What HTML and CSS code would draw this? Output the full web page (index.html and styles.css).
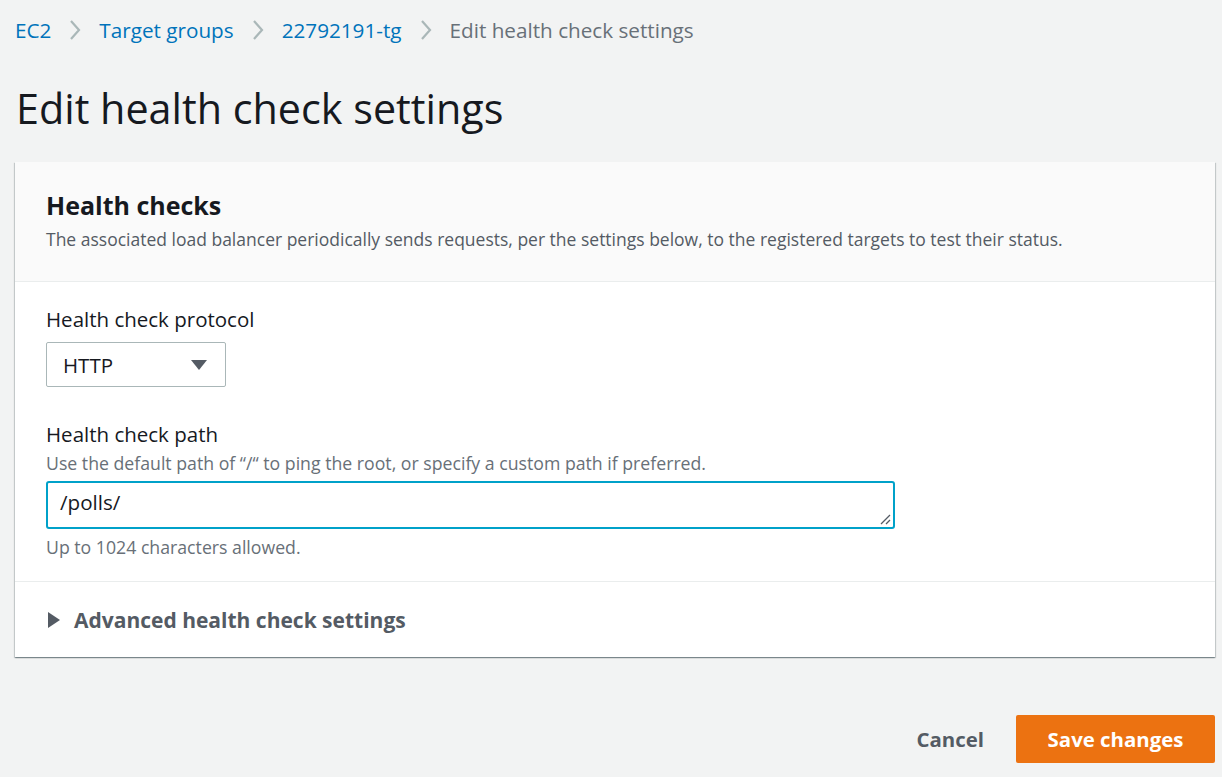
FILE: index.html
```html
<!DOCTYPE html>
<html>
<head>
<meta charset="utf-8">
<link rel="stylesheet" href="styles.css">
</head>
<body>
<div class="page">
  <nav class="crumbs">
    <a class="crumb link">EC2</a>
    <svg class="sep" width="12" height="22" viewBox="0 0 12 22"><path d="M2 2 L10 11 L2 20" fill="none" stroke="#aab7b8" stroke-width="2.2"/></svg>
    <a class="crumb link">Target groups</a>
    <svg class="sep" width="12" height="22" viewBox="0 0 12 22"><path d="M2 2 L10 11 L2 20" fill="none" stroke="#aab7b8" stroke-width="2.2"/></svg>
    <a class="crumb link">22792191-tg</a>
    <svg class="sep" width="12" height="22" viewBox="0 0 12 22"><path d="M2 2 L10 11 L2 20" fill="none" stroke="#aab7b8" stroke-width="2.2"/></svg>
    <span class="crumb current">Edit health check settings</span>
  </nav>
  <h1 class="title">Edit health check settings</h1>
  <section class="card">
    <header class="card-head">
      <h2 class="card-title">Health checks</h2>
      <p class="card-desc">The associated load balancer periodically sends requests, per the settings below, to the registered targets to test their status.</p>
    </header>
    <div class="card-body">
      <div class="field">
        <label class="label">Health check protocol</label>
        <div class="select">
          <span>HTTP</span>
          <svg width="16" height="12" viewBox="0 0 16 12"><path d="M0 1 L16 1 L8 11 Z" fill="#545b64"/></svg>
        </div>
      </div>
      <div class="field">
        <label class="label">Health check path</label>
        <div class="hint">Use the default path of “/“ to ping the root, or specify a custom path if preferred.</div>
        <div class="textarea">
          <span>/polls/</span>
          <svg class="grip" width="12" height="12" viewBox="0 0 12 12"><path d="M11 2 L2 11 M11 7 L7 11" stroke="#545b64" stroke-width="1.3"/></svg>
        </div>
        <div class="hint after">Up to 1024 characters allowed.</div>
      </div>
    </div>
    <div class="card-foot">
      <svg width="14" height="18" viewBox="0 0 14 18"><path d="M1 1 L13 9 L1 17 Z" fill="#545b64"/></svg>
      <span class="adv">Advanced health check settings</span>
    </div>
  </section>
  <div class="actions">
    <button class="btn cancel">Cancel</button>
    <button class="btn primary">Save changes</button>
  </div>
</div>
</body>
</html>
```

FILE: styles.css
```css
html, body { margin: 0; padding: 0; }
body {
  background: #f2f3f3;
  font-family: "Open Sans", "Noto Sans", sans-serif;
  color: #16191f;
  width: 1222px;
  height: 777px;
  overflow: hidden;
}
.page { padding: 0 7px 0 15px; }
.crumbs {
  display: flex;
  align-items: center;
  gap: 18px;
  height: 60px;
  font-size: 20.7px;
}
.crumb { line-height: 26px; }
.link { color: #0073bb; }
.current { color: #687078; }
.sep { display: block; }
.title {
  margin: 0;
  font-size: 41.3px;
  font-weight: 400;
  line-height: 52px;
  padding: 22px 0 28px 1px;
  color: #16191f;
}
.card {
  background: #fff;
  box-shadow: 0 1px 1px 0 rgba(0,28,36,.3), 1px 1px 1px 0 rgba(0,28,36,.15), -1px 1px 1px 0 rgba(0,28,36,.15);
  width: 1200px;
}
.card-head {
  background: #fafafa;
  border-bottom: 1px solid #eaeded;
  padding: 26px 31px 29px;
}
.card-title {
  margin: 0;
  font-size: 25px;
  font-weight: 700;
  line-height: 34px;
}
.card-desc {
  margin: 4px 0 0;
  font-size: 17.5px;
  line-height: 26px;
  color: #545b64;
}
.card-body { padding: 23px 31px 22px; border-bottom: 1px solid #eaeded; }
.field + .field { margin-top: 33px; }
.label { display: block; font-size: 20.5px; line-height: 28px; margin-bottom: 9px; }
.select {
  height: 43px;
  border: 1px solid #aab7b8;
  border-radius: 2px;
  box-sizing: content-box;
  display: flex;
  align-items: center;
  justify-content: space-between;
  width: 162px;
  padding-left: 16px;
  font-size: 20.5px;
}
.select span { line-height: 26px; }
.select svg { margin-right: 18px; }
.hint { font-size: 17.7px; line-height: 24px; color: #687078; margin-top: -6px; margin-bottom: 6px; }
.hint.after { margin-top: 6px; margin-bottom: 0; }
.textarea {
  position: relative;
  border: 2px solid #00a1c9;
  border-radius: 3px;
  display: flex;
  align-items: center;
  padding-left: 12px;
  box-sizing: border-box;
  width: 849px;
  height: 48px;
  font-size: 20.6px;
}
.textarea span { margin-top: -6px; line-height: 26px; }
.grip { position: absolute; right: 2px; bottom: 2px; }
.card-foot {
  display: flex;
  align-items: center;
  gap: 13px;
  height: 75px;
  padding-left: 32px;
}
.adv { font-size: 21px; font-weight: 700; color: #545b64; line-height: 28px; }
.actions {
  display: flex;
  justify-content: flex-end;
  align-items: center;
  gap: 32px;
  margin-top: 58px;
  width: 1200px;
}
.btn {
  font-family: inherit;
  font-size: 20.4px;
  font-weight: 700;
  border: none;
  cursor: pointer;
}
.cancel { background: none; color: #545b64; padding: 0; }
.primary {
  background: #ec7211;
  color: #fff;
  border-radius: 2px;
  width: 199px;
  height: 48px;
}
```
